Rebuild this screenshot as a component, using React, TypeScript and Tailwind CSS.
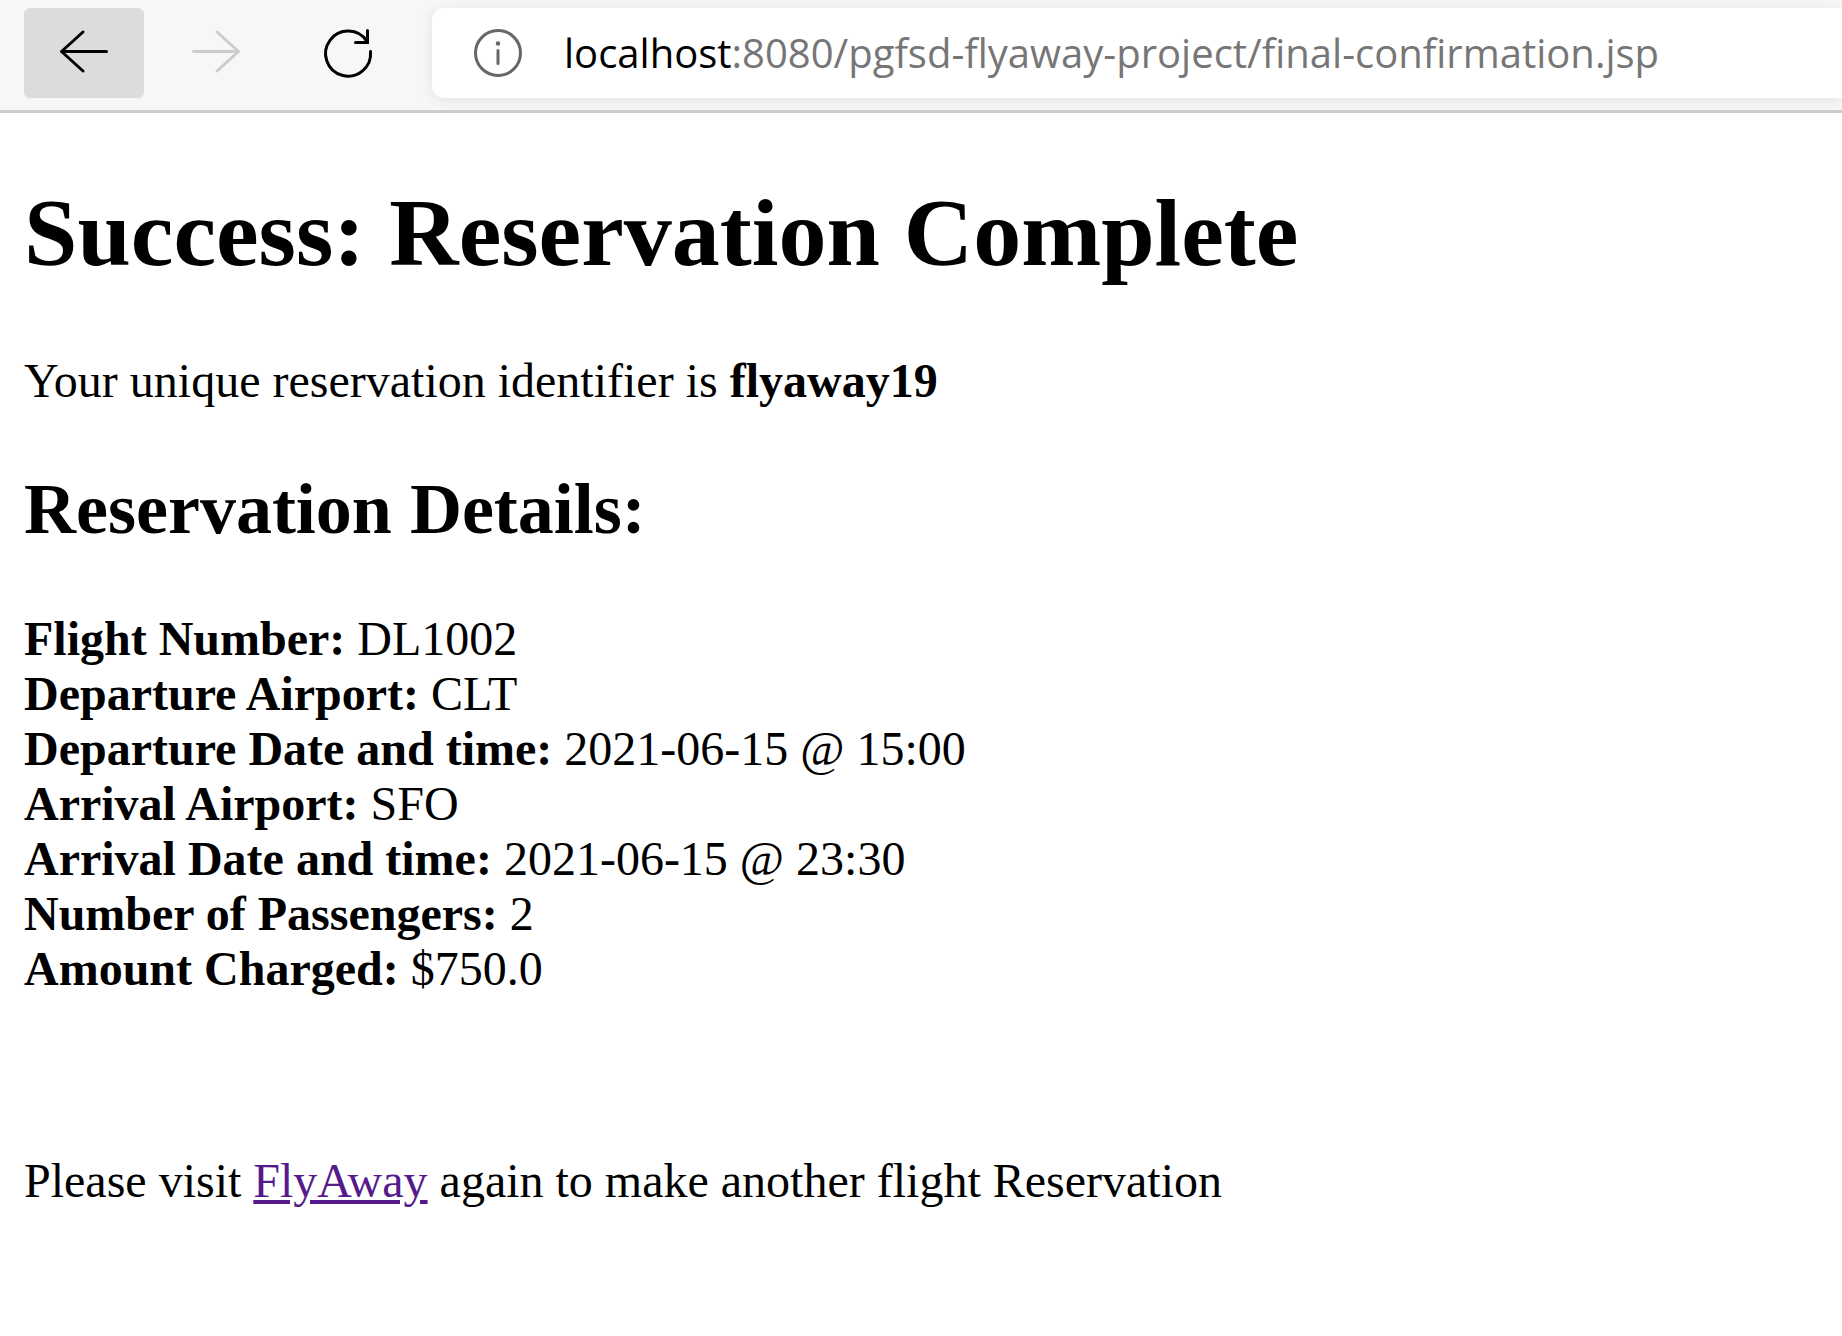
import React from "react";

const details = [
  { label: "Flight Number:", value: "DL1002" },
  { label: "Departure Airport:", value: "CLT" },
  { label: "Departure Date and time:", value: "2021-06-15 @ 15:00" },
  { label: "Arrival Airport:", value: "SFO" },
  { label: "Arrival Date and time:", value: "2021-06-15 @ 23:30" },
  { label: "Number of Passengers:", value: "2" },
  { label: "Amount Charged:", value: "$750.0" },
];

function Toolbar() {
  return (
    <header className="flex items-center overflow-hidden border-b-3 border-[#cecece] bg-[#f7f7f7] pt-2 pb-3 pl-6">
      <nav className="flex shrink-0 gap-3" aria-label="Browser">
        <button type="button" aria-label="Back" className="flex h-[90px] w-[120px] items-center justify-center rounded-md bg-[#dcdcdc] text-black">
          <svg width="120" height="90" viewBox="0 0 120 90" fill="none" stroke="currentColor" strokeWidth="3" strokeLinecap="round" strokeLinejoin="round">
            <path d="M82.5 43.5H37.5M59 24 37.5 43.5 59 63" />
          </svg>
        </button>
        <button type="button" aria-label="Forward" disabled className="flex h-[90px] w-[120px] items-center justify-center text-[#cccccc]">
          <svg width="120" height="90" viewBox="0 0 120 90" fill="none" stroke="currentColor" strokeWidth="3" strokeLinecap="round" strokeLinejoin="round">
            <path d="M37.5 43.5H82.5M61 24 82.5 43.5 61 63" />
          </svg>
        </button>
        <button type="button" aria-label="Refresh" className="flex h-[90px] w-[120px] items-center justify-center text-black">
          <svg width="120" height="90" viewBox="0 0 120 90" fill="none" stroke="currentColor" strokeWidth="3" strokeLinecap="round">
            <path d="M82.5 43.5A22.5 22.5 0 1 1 79 33.4M79.5 22.5V34.5H67.5" />
          </svg>
        </button>
      </nav>
      <div className="ml-6 flex h-[90px] min-w-0 flex-1 items-center rounded-l-xl bg-white pl-[42px] shadow-[0_2px_14px_rgba(0,0,0,0.09)]">
        <button type="button" aria-label="View site information" className="shrink-0 text-[#666666]">
          <svg width="48" height="48" viewBox="0 0 48 48" fill="none" stroke="currentColor" strokeWidth="3" strokeLinecap="round">
            <circle cx="24" cy="24" r="22.5" />
            <path d="M24 21.5V34.5" />
            <circle cx="24" cy="14.5" r="2.2" fill="currentColor" stroke="none" />
          </svg>
        </button>
        <div
          role="textbox"
          aria-label="Address"
          tabIndex={0}
          className="ml-[42px] whitespace-nowrap font-['Open_Sans',sans-serif] text-[40px] leading-[60px] text-[#767676]"
        >
          <span className="text-black">localhost</span>:8080/pgfsd-flyaway-project/final-confirmation.jsp
        </div>
      </div>
    </header>
  );
}

export default function App() {
  return (
    <div className="min-h-screen bg-white">
      <Toolbar />
      <main className="px-6 pt-[65px] pb-16 font-['Liberation_Serif',serif] text-[48px] leading-[55px] text-black">
        <h1 className="text-[96px] leading-[110px] font-bold">Success: Reservation Complete</h1>
        <p className="mt-[65px]">
          Your unique reservation identifier is <b>flyaway19</b>
        </p>
        <h2 className="my-[60px] text-[72px] leading-[83px] font-bold">Reservation Details:</h2>
        <ul>
          {details.map((d) => (
            <li key={d.label}>
              <b>{d.label}</b> {d.value}
            </li>
          ))}
        </ul>
        <p className="mt-[157px]">
          Please visit{" "}
          <a href="#" className="text-[#551a8b] underline">
            FlyAway
          </a>{" "}
          again to make another flight Reservation
        </p>
      </main>
    </div>
  );
}
